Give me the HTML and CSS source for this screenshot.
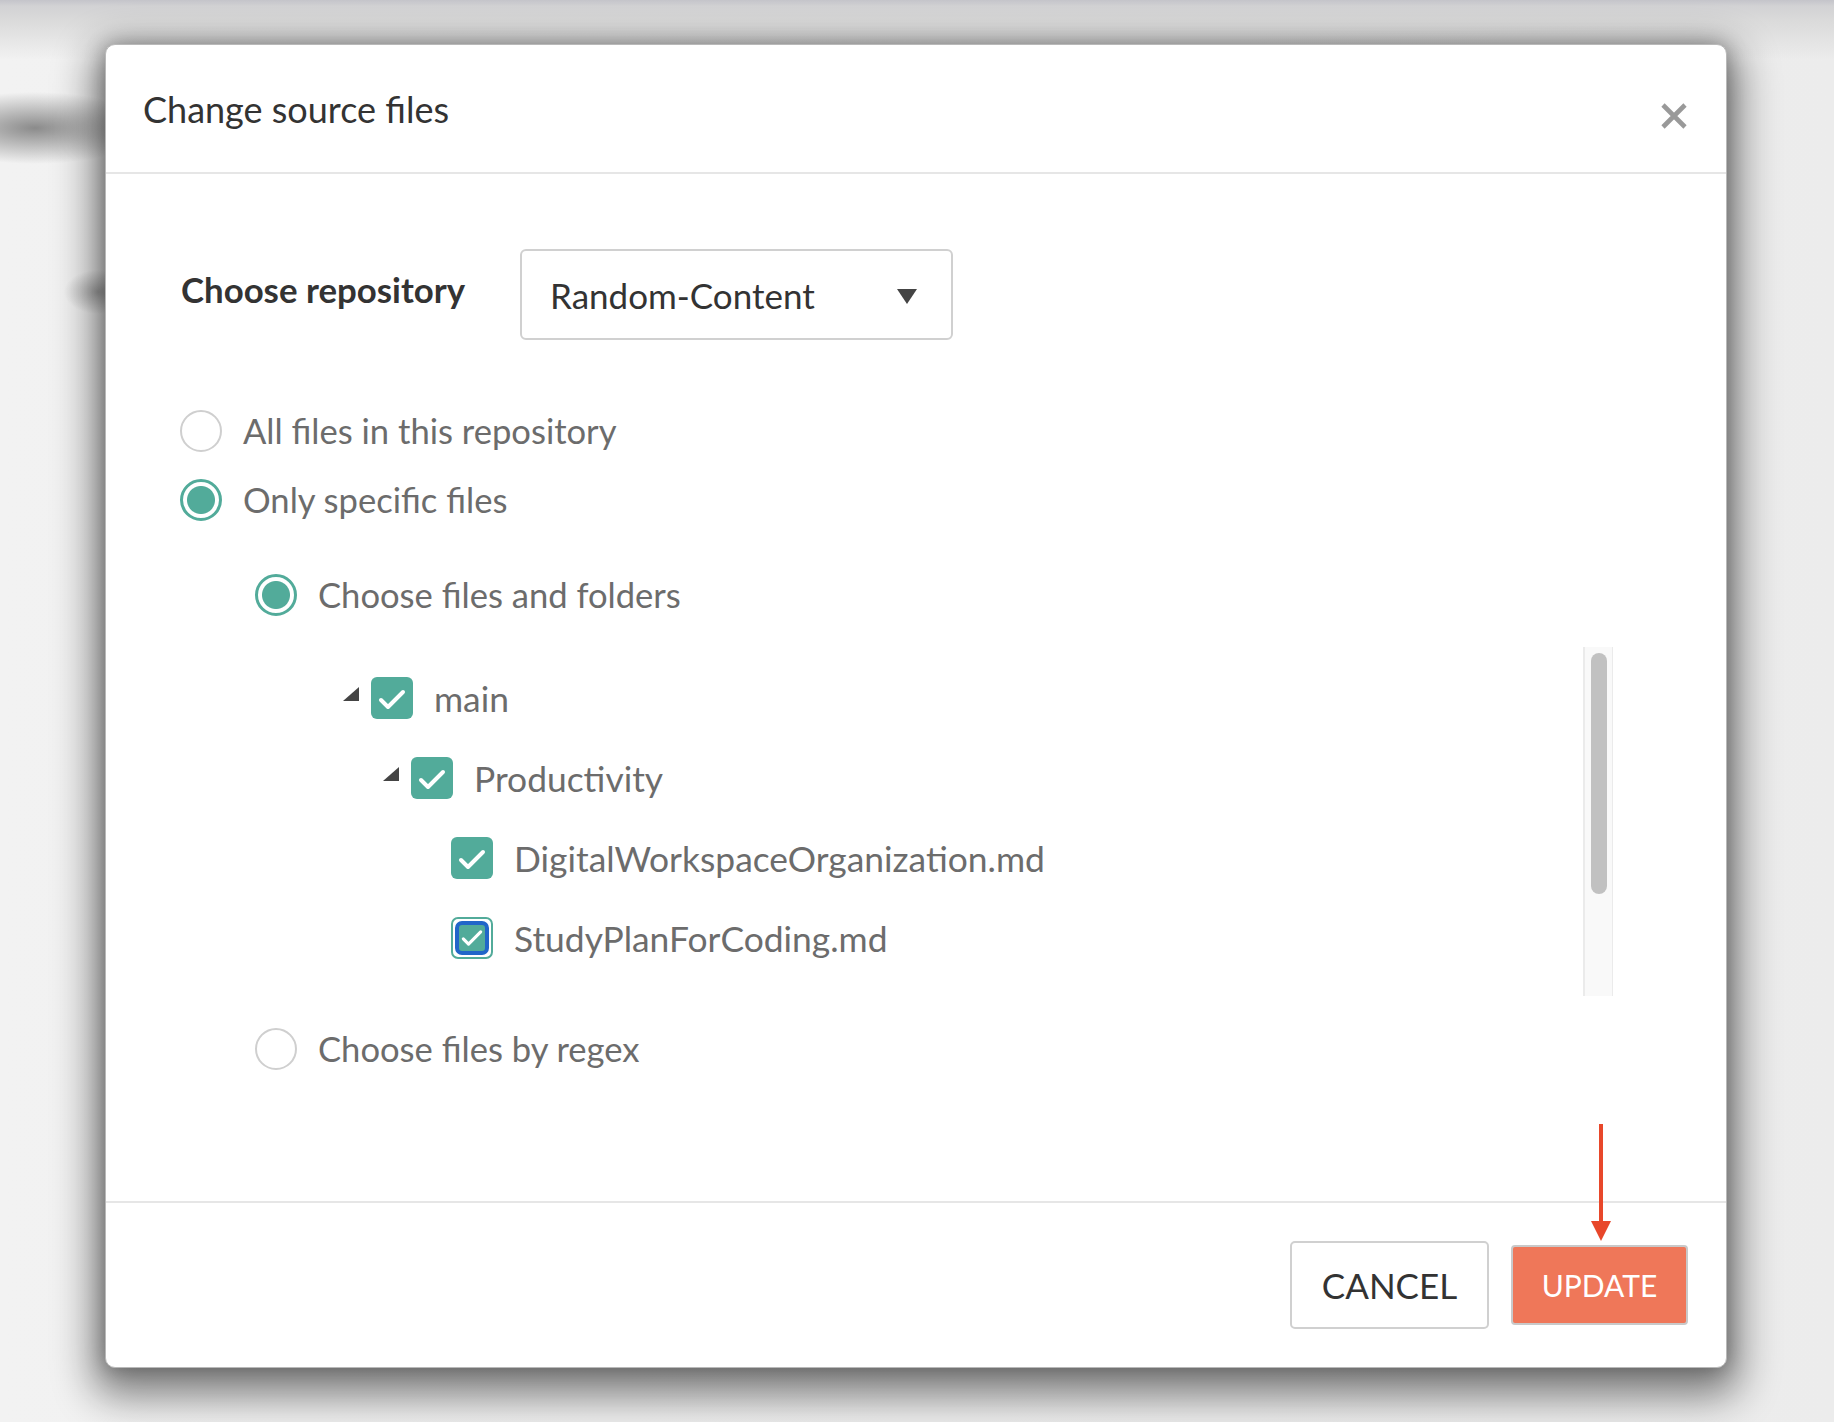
FILE: index.html
```html
<!DOCTYPE html>
<html lang="en">
<head>
<meta charset="utf-8">
<title>Change source files</title>
<link rel="stylesheet" href="styles.css">
</head>
<body>
<div class="modal">
  <div class="modal-header">
    <h1 class="modal-title">Change source files</h1>
    <button class="close-btn" aria-label="Close">
      <svg width="26" height="26" viewBox="0 0 26 26"><path d="M2 2 L24 24 M24 2 L2 24" stroke="#999" stroke-width="4.6" fill="none"/></svg>
    </button>
  </div>
  <div class="modal-body">
    <div class="repo-row">
      <span class="repo-label">Choose repository</span>
      <div class="select">
        <span class="select-value">Random-Content</span>
        <svg class="select-arrow" width="20" height="15" viewBox="0 0 20 15"><polygon points="0,0 20,0 10,15" fill="#444"/></svg>
      </div>
    </div>
    <div class="radio-row first">
      <span class="radio"></span><span class="radio-label">All files in this repository</span>
    </div>
    <div class="radio-row">
      <span class="radio checked"></span><span class="radio-label">Only specific files</span>
    </div>
    <div class="nested">
      <div class="radio-row sub">
        <span class="radio checked"></span><span class="radio-label">Choose files and folders</span>
      </div>
      <div class="tree-box">
        <div class="tree">
          <div class="tree-row lvl0">
            <svg class="caret" width="16" height="14" viewBox="0 0 16 14"><polygon points="16,0 16,14 0,14" fill="#444"/></svg>
            <span class="cb"><svg width="42" height="42" viewBox="0 0 42 42"><path d="M10 23 L17 30 L32 15" stroke="#fff" stroke-width="4" fill="none" stroke-linecap="round" stroke-linejoin="round"/></svg></span>
            <span class="tree-label">main</span>
          </div>
          <div class="tree-row lvl1">
            <svg class="caret" width="16" height="14" viewBox="0 0 16 14"><polygon points="16,0 16,14 0,14" fill="#444"/></svg>
            <span class="cb"><svg width="42" height="42" viewBox="0 0 42 42"><path d="M10 23 L17 30 L32 15" stroke="#fff" stroke-width="4" fill="none" stroke-linecap="round" stroke-linejoin="round"/></svg></span>
            <span class="tree-label">Productivity</span>
          </div>
          <div class="tree-row lvl2">
            <span class="caret-space"></span>
            <span class="cb"><svg width="42" height="42" viewBox="0 0 42 42"><path d="M10 23 L17 30 L32 15" stroke="#fff" stroke-width="4" fill="none" stroke-linecap="round" stroke-linejoin="round"/></svg></span>
            <span class="tree-label">DigitalWorkspaceOrganization.md</span>
          </div>
          <div class="tree-row lvl2">
            <span class="caret-space"></span>
            <span class="cb focus"><span class="cb-inner"><svg width="30" height="30" viewBox="0 0 30 30"><path d="M5 16 L11 22 L25 8" stroke="#fff" stroke-width="3.6" fill="none" stroke-linecap="round" stroke-linejoin="round"/></svg></span></span>
            <span class="tree-label">StudyPlanForCoding.md</span>
          </div>
        </div>
        <div class="scrollbar"><div class="thumb"></div></div>
      </div>
      <div class="radio-row regex">
        <span class="radio"></span><span class="radio-label">Choose files by regex</span>
      </div>
    </div>
  </div>
  <div class="modal-footer">
    <button class="btn btn-cancel">CANCEL</button>
    <div class="update-wrap">
      <svg class="annot-arrow" width="20" height="117" viewBox="0 0 20 117"><line x1="10" y1="0" x2="10" y2="100" stroke="#e8472a" stroke-width="4"/><polygon points="0,97 20,97 10,117" fill="#e8472a"/></svg>
      <button class="btn btn-update">UPDATE</button>
    </div>
  </div>
</div>
</body>
</html>
```
FILE: styles.css
```css
* { box-sizing: border-box; }
html, body { margin: 0; padding: 0; }
body {
  width: 1834px;
  height: 1422px;
  overflow: hidden;
  font-family: Lato, "Open Sans", "Liberation Sans", sans-serif;
  background:
    radial-gradient(ellipse 115px 36px at 35px 128px, rgba(70,70,70,0.6), rgba(70,70,70,0) 100%),
    radial-gradient(ellipse 34px 22px at 98px 292px, rgba(70,70,70,0.4), rgba(70,70,70,0) 100%),
    linear-gradient(180deg, #c4c4ca 0px, #d2d2d4 6px, #dadada 20px, rgba(236,236,236,0) 60px),
    linear-gradient(90deg, #f2f2f2 0px, #ececec 100%);
  display: flex;
  align-items: flex-start;
}
.modal {
  margin: 44px 0 0 105px;
  width: 1622px;
  height: 1324px;
  background: #fff;
  border: 1px solid #b9b9b9;
  border-radius: 10px;
  box-shadow: 0 16px 40px 12px rgba(0,0,0,0.48), 0 0 20px rgba(0,0,0,0.28);
  display: flex;
  flex-direction: column;
}
.modal-header {
  height: 129px;
  flex: none;
  border-bottom: 2px solid #e6e6e6;
  display: flex;
  align-items: center;
  justify-content: space-between;
  padding: 0 39px 0 37px;
}
.modal-title {
  margin: 0;
  font-size: 36px;
  font-weight: 400;
  color: #333;
}
.close-btn {
  border: 0;
  background: none;
  padding: 0;
  margin-top: 15px;
  width: 26px;
  height: 26px;
  display: block;
}
.close-btn svg { display: block; }
.modal-body {
  height: 1027px;
  flex: none;
  padding: 75px 113px 0 74px;
  display: flex;
  flex-direction: column;
}
.repo-row {
  display: flex;
  align-items: center;
  height: 91px;
}
.repo-label {
  width: 340px;
  padding-left: 1px;
  margin-bottom: 10px;
  font-size: 34.8px;
  font-weight: 700;
  color: #333;
}
.select {
  width: 433px;
  height: 91px;
  border: 2px solid #d0d0d0;
  border-radius: 6px;
  display: flex;
  align-items: center;
  justify-content: space-between;
  padding: 0 34px 0 28px;
}
.select-value {
  font-size: 35px;
  color: #333;
}
.select-arrow { display: block; margin-top: 4px; }
.radio-row {
  display: flex;
  align-items: center;
  height: 69px;
}
.radio-row.first { margin-top: 56px; }
.radio-row.sub { margin-top: 26px; }
.radio-row.regex { margin-top: 18px; }
.radio {
  width: 42px;
  height: 42px;
  flex: none;
  border-radius: 50%;
  border: 2px solid #cfcfcf;
  background: #fff;
  margin-right: 21px;
}
.radio.checked {
  border: 3px solid #52ab9a;
  background: radial-gradient(circle, #52ab9a 0, #52ab9a 13.5px, #fff 14.5px);
}
.radio-label {
  font-size: 34.6px;
  color: #6c6c6c;
}
.nested {
  padding-left: 75px;
  display: flex;
  flex-direction: column;
}
.tree-box {
  margin-top: 18px;
  height: 349px;
  display: flex;
}
.tree {
  flex: 1;
  padding-top: 11px;
}
.tree-row {
  height: 80px;
  display: flex;
  align-items: center;
}
.tree-row.lvl0 { padding-left: 88px; }
.tree-row.lvl1 { padding-left: 128px; }
.tree-row.lvl2 { padding-left: 168px; }
.caret {
  display: block;
  flex: none;
  margin-right: 12px;
  margin-bottom: 8px;
}
.caret-space { width: 28px; flex: none; }
.cb {
  width: 42px;
  height: 42px;
  flex: none;
  border-radius: 6px;
  background: #52ab9a;
  margin-right: 21px;
  display: flex;
  align-items: center;
  justify-content: center;
}
.cb svg { display: block; }
.cb.focus {
  background: #fff;
  border: 2px solid #52ab9a;
  border-radius: 7px;
  padding: 2px;
}
.cb-inner {
  width: 34px;
  height: 34px;
  border: 4px solid #2166c9;
  border-radius: 7px;
  background: #52ab9a;
  display: flex;
  align-items: center;
  justify-content: center;
}
.tree-label {
  font-size: 35.4px;
  color: #6c6c6c;
}
.scrollbar {
  width: 30px;
  flex: none;
  height: 349px;
  background: #f9f9f9;
  border-left: 2px solid #ebebeb;
  border-right: 1px solid #ebebeb;
  padding: 6px 0 0 6px;
}
.thumb {
  width: 16px;
  height: 241px;
  border-radius: 8px;
  background: #c1c1c1;
}
.modal-footer {
  flex: 1;
  border-top: 2px solid #e6e6e6;
  display: flex;
  align-items: center;
  justify-content: flex-end;
  padding-right: 38px;
  gap: 22px;
}
.btn {
  font-family: Lato, "Open Sans", "Liberation Sans", sans-serif;
  cursor: pointer;
  padding: 0;
}
.btn-cancel {
  width: 199px;
  height: 88px;
  background: #fff;
  border: 2px solid #d0d0d0;
  border-radius: 5px;
  font-size: 35px;
  color: #333;
}
.update-wrap { position: relative; }
.btn-update {
  width: 177px;
  height: 80px;
  background: #ef7759;
  border: 2px solid #c9c9c9;
  border-radius: 4px;
  font-size: 30px;
  color: #fff;
  display: block;
}
.annot-arrow {
  position: absolute;
  left: 80px;
  top: -121px;
  display: block;
}
```
